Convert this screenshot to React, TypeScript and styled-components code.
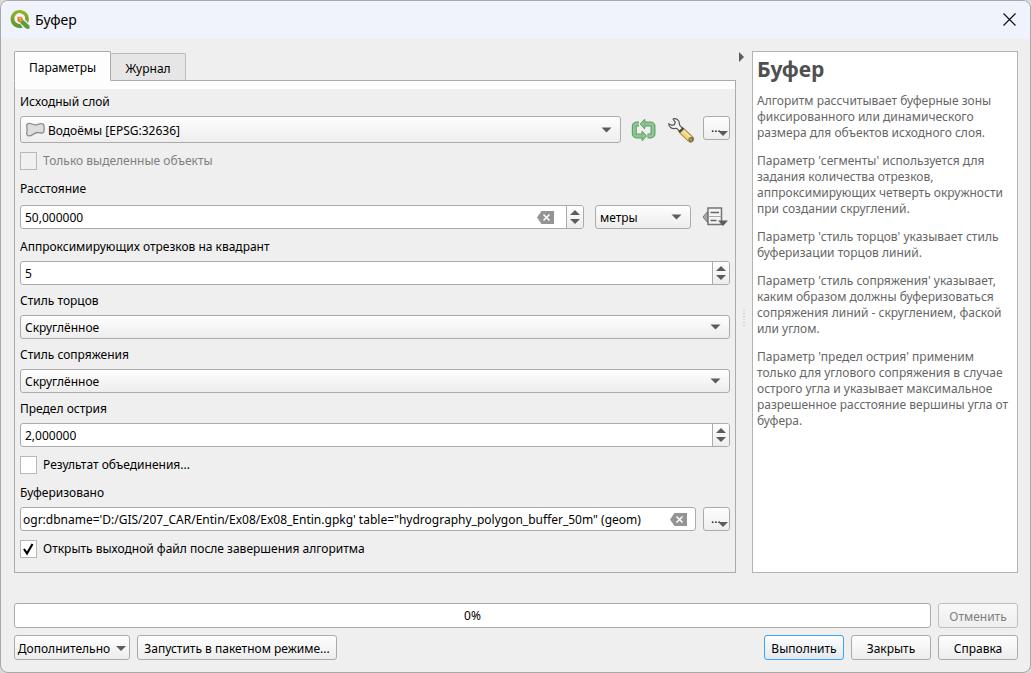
import React from "react";
import styled, { createGlobalStyle, css } from "styled-components";

const UI_FONT = '"Noto Sans", sans-serif';
const ARROW = "#5c5c5c";

const GlobalStyle = createGlobalStyle`
  *, *::before, *::after { box-sizing: border-box; }
  html { background: #d9d9d9; }
  body { margin: 0; }
  button, input, select { font: inherit; color: inherit; margin: 0; }
`;

const Dialog = styled.div`
  display: flex;
  flex-direction: column;
  min-height: 100vh;
  background: #efefef;
  border: 1px solid #a8a8a8;
  border-radius: 8px;
  overflow: hidden;
  color: #000;
  font: 12px/16px ${UI_FONT};
`;

const TitleBar = styled.header`
  display: flex;
  align-items: center;
  gap: 4px;
  height: 37px;
  padding: 0 14px 0 8px;
  background: #f0f3fb;
`;

const Title = styled.h1`
  flex: 1;
  margin: 0;
  font: 14px/20px ${UI_FONT};
`;

const PlainButton = styled.button`
  display: grid;
  place-items: center;
  padding: 0;
  border: 0;
  background: none;
`;

const Main = styled.main`
  flex: 1;
  display: flex;
  flex-direction: column;
  gap: 30px;
  padding: 13px 12px 12px 13px;
`;

const Split = styled.div`
  flex: 1;
  display: grid;
  grid-template-columns: minmax(0, 1fr) 16px 266px;
`;

const TabSet = styled.section`
  display: flex;
  flex-direction: column;
`;

const TabList = styled.div`
  display: flex;
  align-items: flex-end;
  height: 30px;
`;

const Tab = styled.button<{ $active?: boolean }>`
  padding: 4px 0 0;
  border: 1px solid #ababab;
  border-radius: 2px 2px 0 0;
  ${(p) =>
    p.$active
      ? css`
          width: 97px;
          height: 30px;
          background: #fdfdfd;
          border-bottom-color: #fdfdfd;
          z-index: 1;
        `
      : css`
          width: 75px;
          height: 28px;
          border-left: 0;
          background: #e6e6e6;
          border-color: #bcbcbc;
          border-bottom-color: #ababab;
        `}
`;

const TabPanel = styled.div`
  flex: 1;
  margin-top: -1px;
  border: 1px solid #ababab;
  background: linear-gradient(#fdfdfd 8px, #efefef 8px);
  padding: 11px 5px;
`;

const Form = styled.form`
  display: flex;
  flex-direction: column;
  gap: 6px;
`;

const Field = styled.div`
  display: flex;
  flex-direction: column;
  gap: 4px;
`;

const FieldLabel = styled.label`
  line-height: 20px;
`;

const ControlRow = styled.div<{ $gap?: number; $height?: number }>`
  display: flex;
  align-items: center;
  gap: ${(p) => p.$gap ?? 10}px;
  min-height: ${(p) => p.$height ?? 24}px;
`;

const raised = css`
  border: 1px solid #ababab;
  border-radius: 3px;
  background: linear-gradient(#fefefe, #ededed);
`;

const ComboFrame = styled.div<{ $tall?: boolean; $width?: number }>`
  ${raised}
  position: relative;
  display: flex;
  align-items: center;
  gap: 2px;
  min-width: 0;
  height: ${(p) => (p.$tall ? 27 : 24)}px;
  padding-left: ${(p) => (p.$tall ? 3 : 4)}px;
  ${(p) => (p.$width ? `width: ${p.$width}px;` : "flex: 1;")}
  & > select {
    flex: 1;
    min-width: 0;
    height: 100%;
    padding: 2px 20px 0 0;
    border: 0;
    outline: 0;
    background: none;
    appearance: none;
  }
`;

const ComboArrow = styled.svg`
  position: absolute;
  right: 8px;
  pointer-events: none;
`;

const InputFrame = styled.div<{ $inset?: number }>`
  flex: 1;
  display: flex;
  align-items: center;
  min-width: 0;
  height: 24px;
  border: 1px solid #ababab;
  border-radius: 3px;
  background: #fff;
  overflow: hidden;
  & > input {
    flex: 1;
    min-width: 0;
    height: 100%;
    padding: 0 0 0 ${(p) => p.$inset ?? 4}px;
    border: 0;
    outline: 0;
    background: none;
  }
`;

const ClearButton = styled(PlainButton)<{ $far?: boolean }>`
  width: 18px;
  height: 22px;
  margin-right: ${(p) => (p.$far ? 12 : 8)}px;
`;

const Stepper = styled.div`
  display: flex;
  flex-direction: column;
  justify-content: center;
  gap: 4px;
  width: 17px;
  height: 22px;
  border-left: 1px solid #ababab;
  background: linear-gradient(#fefefe, #ededed);
`;

const IconButton = styled(PlainButton)<{ $width: number }>`
  width: ${(p) => p.$width}px;
  height: 26px;
`;

const MoreButton = styled.button<{ $top?: boolean }>`
  ${raised}
  position: relative;
  width: 27px;
  height: 24px;
  padding: 0 0 0 7px;
  text-align: left;
  align-self: ${(p) => (p.$top ? "flex-start" : "center")};
  & > svg {
    position: absolute;
    right: 1px;
    bottom: 3px;
  }
`;

const CheckLabel = styled.label<{ $muted?: boolean }>`
  display: flex;
  align-items: center;
  gap: 6px;
  padding: 3px 0;
  line-height: 18px;
  color: ${(p) => (p.$muted ? "#808080" : "#000")};
`;

const CheckBox = styled.input<{ $muted?: boolean }>`
  appearance: none;
  width: 17px;
  height: 18px;
  border: 1px solid #b8b8b8;
  background: ${(p) => (p.$muted ? "#f0f0f0" : "#fff")};
  &:checked {
    background: #fff
      url("data:image/svg+xml,%3Csvg xmlns='http://www.w3.org/2000/svg' viewBox='0 0 15 16'%3E%3Cpath d='M3 8 6 12.500 11.500 3' fill='none' stroke='black' stroke-width='2.200'/%3E%3C/svg%3E")
      center / 15px 16px no-repeat;
  }
`;

const Splitter = styled.div`
  display: flex;
  flex-direction: column;
  align-items: center;
`;

const Grip = styled.svg`
  margin: auto 0;
`;

const Help = styled.aside`
  padding: 4px;
  border: 1px solid #b4b4b4;
  background: #fff;
  color: #666;
  & > h2 {
    margin: 0 0 11px;
    color: #505050;
    font: bold 21px/26px ${UI_FONT};
  }
  & > p {
    margin: 0 0 12px;
  }
`;

const Footer = styled.footer`
  display: grid;
  gap: 7px;
`;

const FooterRow = styled.div`
  display: flex;
  gap: 7px;
`;

const Progress = styled.div`
  flex: 1;
  height: 25px;
  border: 1px solid #ababab;
  border-radius: 3px;
  background: #fff;
  line-height: 24px;
  text-align: center;
`;

const PushButton = styled.button<{ $width?: number; $primary?: boolean }>`
  ${raised}
  display: flex;
  align-items: center;
  justify-content: center;
  gap: 6px;
  width: ${(p) => p.$width ?? 80}px;
  height: 25px;
  padding: 2px 0 0;
  white-space: nowrap;
  ${(p) =>
    p.$primary &&
    css`
      border-color: #3fa4f4;
      background: linear-gradient(#fdfeff, #e1e8ee);
    `}
  &:disabled {
    color: #808080;
    border-color: #c0c0c0;
    background: linear-gradient(#f8f8f8, #eeeeee);
  }
`;

const Spacer = styled.div`
  flex: 1;
`;

const DownTriangle = () => (
  <svg width="10" height="5" viewBox="0 0 10 5" aria-hidden="true">
    <path d="M0 0h10L5 5z" fill={ARROW} />
  </svg>
);

const UpTriangle = () => (
  <svg width="10" height="5" viewBox="0 0 10 5" aria-hidden="true">
    <path d="M0 5h10L5 0z" fill={ARROW} />
  </svg>
);

const QgisLogo = () => (
  <svg width="22" height="22" viewBox="0 0 22 22" aria-hidden="true">
    <defs>
      <linearGradient id="qgreen" x1="0" y1="0" x2="0" y2="1">
        <stop offset="0" stopColor="#98b524" />
        <stop offset="1" stopColor="#589632" />
      </linearGradient>
    </defs>
    <path
      d="M10.500 1a9 9 0 1 0 3.300 17.400l-2.800-3.500a5.400 5.400 0 1 1 5-4.300l3 3.200A9 9 0 0 0 10.500 1z"
      fill="url(#qgreen)"
    />
    <path d="M11.500 11.300h3.200l5.800 5.500v3h-3.300l-5.700-5.500z" fill="#5f9c33" />
    <path d="M8.500 7.700l4.300.2 1.500 3.200h-2.900l-.1 3-2.800-2z" fill="#ee7913" />
    <path d="M9.300 8.400l2.500.2 1 1.800-2 .2z" fill="#f9a94b" />
  </svg>
);

const PolygonIcon = () => (
  <svg width="22" height="18" viewBox="0 0 22 18" aria-hidden="true">
    <path
      d="M4 2.600C6.500 1.500 8.500 4.200 12 3.800c2.500-.3 4-1.600 6.500-1 1.800.5 1.700 2.300 1.600 4.200-.1 2 .3 3.500-.8 4.500-1.400 1.200-3.400.1-5.300 0-2.300-.1-3.700 1-5.500 2.300-1.900 1.400-4.600 1.700-5.500 0-.7-1.500.1-3 .1-5.300C3.100 6.500 1.600 3.600 4 2.600z"
      fill="#dedede"
      stroke="#8c8c8c"
      strokeWidth="1.300"
    />
  </svg>
);

const IterateIcon = () => (
  <svg width="26" height="24" viewBox="0 0 26 24" aria-hidden="true">
    {[
      { stroke: "#5d9f64", width: 5, head: 1.8 },
      { stroke: "#8fc493", width: 2.8, head: 0 },
    ].map((s) => (
      <g key={s.stroke} stroke={s.stroke} strokeLinejoin="round">
        <path
          d="M8 6H5.500A2.300 2.300 0 0 0 3.300 8.300v7.400A2.300 2.300 0 0 0 5.500 18H11M16.500 18h3.200a2.300 2.300 0 0 0 2.300-2.300V8.300A2.300 2.300 0 0 0 19.700 6H14"
          fill="none"
          strokeWidth={s.width}
        />
        <path d="M9.800 6 13.500 2v8zM15 18l-3.700-4v8z" fill="#8fc493" strokeWidth={s.head} />
      </g>
    ))}
  </svg>
);

const WrenchIcon = () => (
  <svg width="28" height="28" viewBox="0 0 28 28" aria-hidden="true">
    <path d="M15 14 23.500 22" stroke="#9c8644" strokeWidth="7" strokeLinecap="round" />
    <path d="M15 14 23.300 21.900" stroke="#efd67f" strokeWidth="5" />
    <path d="M16.500 13.800l7.500 7" stroke="#faeaa8" strokeWidth="1.200" />
    <circle cx="23.800" cy="22.400" r="2" fill="#a8966a" stroke="#6d5c2e" strokeWidth="0.800" />
    <path
      d="M6 2c3-1 6.500.8 6.300 4.500 0 1 .2 1.700.9 2.400l2.500 2.500-3 3-2.700-2.700C9.300 11.200 8.500 11.500 7.600 11.500 4.600 11.900 2 10 1.600 6.800l3 1.500 2.800-.6.900-2.500z"
      fill="#f3f3f3"
      stroke="#555"
      strokeWidth="1.200"
      strokeLinejoin="round"
    />
    <path d="M16.400 11l-4 4" stroke="#444" strokeWidth="2" />
  </svg>
);

const DataDefinedIcon = () => (
  <svg width="28" height="22" viewBox="0 0 28 22" aria-hidden="true">
    <path d="M6 5v12L1 11z" fill="#a8a8a8" stroke="#747474" />
    <rect x="6" y="2" width="13.500" height="16.500" fill="#f4f4f4" stroke="#747474" strokeWidth="1.500" />
    <path d="M8.500 6.500h8.500M8.500 14.500h6" stroke="#666" strokeWidth="1.600" />
    <path d="M7 10.500h12" stroke="#aaa" />
    <path d="M16 14.500h10L21 20z" fill={ARROW} />
  </svg>
);

const ClearIcon = () => (
  <svg width="17" height="13" viewBox="0 0 17 13" aria-hidden="true">
    <path d="M4.500 0H17v13H4.500L0 6.500z" fill="#949494" />
    <path d="M6.500 3.500l6 6M12.500 3.500l-6 6" stroke="#fff" strokeWidth="1.500" />
  </svg>
);

const CloseIcon = () => (
  <svg width="13" height="13" viewBox="0 0 13 13" aria-hidden="true">
    <path d="M.5.5l12 12M12.500.5l-12 12" stroke="#111" strokeWidth="1.200" />
  </svg>
);

function Combo({
  id,
  value,
  label,
  icon,
  tall,
  width,
}: {
  id: string;
  value: string;
  label?: string;
  icon?: React.ReactNode;
  tall?: boolean;
  width?: number;
}) {
  return (
    <ComboFrame $tall={tall} $width={width}>
      {icon}
      <select id={id} aria-label={label}>
        <option>{value}</option>
      </select>
      <ComboArrow width="11" height="6" viewBox="0 0 11 6" aria-hidden="true">
        <path d="M.5.5h10L5.500 5.500z" fill={ARROW} />
      </ComboArrow>
    </ComboFrame>
  );
}

function SpinBox({ id, value, clearable }: { id: string; value: string; clearable?: boolean }) {
  return (
    <InputFrame>
      <input id={id} type="text" defaultValue={value} />
      {clearable && (
        <ClearButton type="button" aria-label="Очистить" $far>
          <ClearIcon />
        </ClearButton>
      )}
      <Stepper>
        <PlainButton type="button" aria-label="Больше">
          <UpTriangle />
        </PlainButton>
        <PlainButton type="button" aria-label="Меньше">
          <DownTriangle />
        </PlainButton>
      </Stepper>
    </InputFrame>
  );
}

function More({ top }: { top?: boolean }) {
  return (
    <MoreButton type="button" $top={top}>
      ...
      <DownTriangle />
    </MoreButton>
  );
}

const HELP = [
  "Алгоритм рассчитывает буферные зоны фиксированного или динамического размера для объектов исходного слоя.",
  "Параметр 'сегменты' используется для задания количества отрезков, аппроксимирующих четверть окружности при создании скруглений.",
  "Параметр 'стиль торцов' указывает стиль буферизации торцов линий.",
  "Параметр 'стиль сопряжения' указывает, каким образом должны буферизоваться сопряжения линий - скруглением, фаской или углом.",
  "Параметр 'предел острия' применим только для углового сопряжения в случае острого угла и указывает максимальное разрешенное расстояние вершины угла от буфера.",
];

export default function App() {
  return (
    <>
      <GlobalStyle />
      <Dialog>
        <TitleBar>
          <QgisLogo />
          <Title>Буфер</Title>
          <PlainButton type="button" aria-label="Закрыть окно">
            <CloseIcon />
          </PlainButton>
        </TitleBar>
        <Main>
          <Split>
            <TabSet>
              <TabList role="tablist">
                <Tab type="button" role="tab" aria-selected="true" $active>
                  Параметры
                </Tab>
                <Tab type="button" role="tab" aria-selected="false">
                  Журнал
                </Tab>
              </TabList>
              <TabPanel role="tabpanel">
                <Form onSubmit={(e) => e.preventDefault()}>
                  <Field>
                    <FieldLabel htmlFor="layer">Исходный слой</FieldLabel>
                    <ControlRow $height={27}>
                      <Combo id="layer" value="Водоёмы [EPSG:32636]" icon={<PolygonIcon />} tall />
                      <IconButton type="button" $width={26} aria-label="Обойти объекты">
                        <IterateIcon />
                      </IconButton>
                      <IconButton type="button" $width={26} aria-label="Настройки слоя">
                        <WrenchIcon />
                      </IconButton>
                      <More top />
                    </ControlRow>
                  </Field>
                  <CheckLabel $muted>
                    <CheckBox type="checkbox" disabled $muted />
                    Только выделенные объекты
                  </CheckLabel>
                  <Field>
                    <FieldLabel htmlFor="distance">Расстояние</FieldLabel>
                    <ControlRow $height={28} $gap={11}>
                      <SpinBox id="distance" value="50,000000" clearable />
                      <Combo id="units" label="Единицы" value="метры" width={96} />
                      <IconButton type="button" $width={28} aria-label="Переопределение данными">
                        <DataDefinedIcon />
                      </IconButton>
                    </ControlRow>
                  </Field>
                  <Field>
                    <FieldLabel htmlFor="segments">Аппроксимирующих отрезков на квадрант</FieldLabel>
                    <ControlRow>
                      <SpinBox id="segments" value="5" />
                    </ControlRow>
                  </Field>
                  <Field>
                    <FieldLabel htmlFor="cap">Стиль торцов</FieldLabel>
                    <ControlRow>
                      <Combo id="cap" value="Скруглённое" />
                    </ControlRow>
                  </Field>
                  <Field>
                    <FieldLabel htmlFor="join">Стиль сопряжения</FieldLabel>
                    <ControlRow>
                      <Combo id="join" value="Скруглённое" />
                    </ControlRow>
                  </Field>
                  <Field>
                    <FieldLabel htmlFor="miter">Предел острия</FieldLabel>
                    <ControlRow>
                      <SpinBox id="miter" value="2,000000" />
                    </ControlRow>
                  </Field>
                  <CheckLabel>
                    <CheckBox type="checkbox" />
                    Результат объединения...
                  </CheckLabel>
                  <Field>
                    <FieldLabel htmlFor="output">Буферизовано</FieldLabel>
                    <ControlRow $gap={7}>
                      <InputFrame $inset={2}>
                        <input
                          id="output"
                          type="text"
                          defaultValue={`ogr:dbname='D:/GIS/207_CAR/Entin/Ex08/Ex08_Entin.gpkg' table="hydrography_polygon_buffer_50m" (geom)`}
                        />
                        <ClearButton type="button" aria-label="Очистить">
                          <ClearIcon />
                        </ClearButton>
                      </InputFrame>
                      <More />
                    </ControlRow>
                  </Field>
                  <CheckLabel>
                    <CheckBox type="checkbox" defaultChecked />
                    Открыть выходной файл после завершения алгоритма
                  </CheckLabel>
                </Form>
              </TabPanel>
            </TabSet>
            <Splitter>
              <svg width="10" height="12" viewBox="0 0 10 12" aria-hidden="true">
                <path d="M0 1v10l5-5z" fill={ARROW} />
              </svg>
              <Grip width="2" height="16" viewBox="0 0 2 16" aria-hidden="true">
                <path d="M1 0v16" stroke="#b0b0b0" strokeWidth="1" strokeDasharray="1 2" />
              </Grip>
            </Splitter>
            <Help>
              <h2>Буфер</h2>
              {HELP.map((text) => (
                <p key={text}>{text}</p>
              ))}
            </Help>
          </Split>
          <Footer>
            <FooterRow>
              <Progress role="progressbar" aria-label="Ход выполнения" aria-valuenow={0}>
                0%
              </Progress>
              <PushButton type="button" disabled>
                Отменить
              </PushButton>
            </FooterRow>
            <FooterRow>
              <PushButton type="button" $width={116}>
                Дополнительно
                <DownTriangle />
              </PushButton>
              <PushButton type="button" $width={200}>
                Запустить в пакетном режиме...
              </PushButton>
              <Spacer />
              <PushButton type="button" $primary>
                Выполнить
              </PushButton>
              <PushButton type="button">Закрыть</PushButton>
              <PushButton type="button">Справка</PushButton>
            </FooterRow>
          </Footer>
        </Main>
      </Dialog>
    </>
  );
}
